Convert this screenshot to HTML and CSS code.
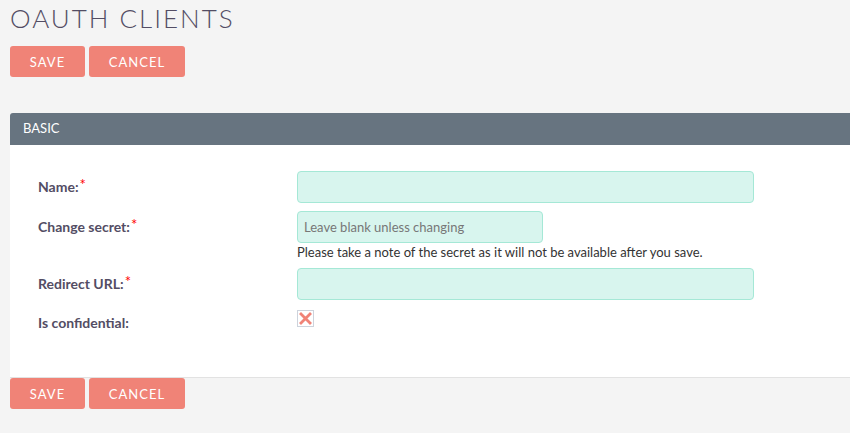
FILE: index.html
```html
<!DOCTYPE html>
<html>
<head>
<meta charset="utf-8">
<link rel="stylesheet" href="styles.css">
</head>
<body>
<h1 class="title">OAUTH CLIENTS</h1>
<div class="actions">
  <button class="btn btn-save">SAVE</button>
  <button class="btn btn-cancel">CANCEL</button>
</div>
<div class="panel">
  <div class="panel-head">BASIC</div>
  <div class="panel-body">
    <div class="row row-name">
      <label class="lbl">Name:<span class="req">*</span></label>
      <div class="field"><input class="inp inp-wide" type="text"></div>
    </div>
    <div class="row row-secret">
      <label class="lbl">Change secret:<span class="req">*</span></label>
      <div class="field">
        <input class="inp inp-short" type="text" placeholder="Leave blank unless changing">
        <div class="help">Please take a note of the secret as it will not be available after you save.</div>
      </div>
    </div>
    <div class="row row-url">
      <label class="lbl">Redirect URL:<span class="req">*</span></label>
      <div class="field"><input class="inp inp-wide" type="text"></div>
    </div>
    <div class="row row-conf">
      <label class="lbl">Is confidential:</label>
      <div class="field">
        <span class="check">
          <svg width="17" height="17" viewBox="0 0 17 17">
            <rect x="0.5" y="0.5" width="16" height="16" fill="#fff" stroke="#cdd3dc"/>
            <path d="M4 4 L13 13 M13 4 L4 13" stroke="#f08377" stroke-width="2.8" stroke-linecap="square"/>
          </svg>
        </span>
      </div>
    </div>
  </div>
</div>
<div class="actions actions-bottom">
  <button class="btn btn-save">SAVE</button>
  <button class="btn btn-cancel">CANCEL</button>
</div>
</body>
</html>
```
FILE: styles.css
```css
html, body {
  margin: 0;
  padding: 0;
  background: #f4f4f4;
  font-family: Lato, "Open Sans", sans-serif;
  overflow: hidden;
}
body {
  padding: 0 0 0 10px;
}
.title {
  margin: 0;
  padding-top: 3px;
  height: 46px;
  box-sizing: border-box;
  font-size: 26px;
  font-weight: 300;
  letter-spacing: 2px;
  color: #534d64;
  line-height: 30px;
}
.actions {
  display: flex;
  gap: 4px;
  height: 31px;
}
.btn {
  border: none;
  background: #f08377;
  color: #fff;
  font-family: Lato, sans-serif;
  font-size: 13px;
  letter-spacing: 1px;
  border-radius: 3px;
  height: 31px;
  padding: 0;
  cursor: pointer;
}
.btn-save { width: 75px; }
.btn-cancel { width: 96px; }
.panel {
  margin-top: 36px;
}
.panel-head {
  background: #677480;
  color: #fff;
  font-size: 13px;
  height: 32px;
  line-height: 30px;
  padding-left: 13px;
  border-radius: 3px 0 0 0;
}
.panel-body {
  background: #fff;
  border-bottom: 1px solid #e2e2e2;
  padding: 26px 0 0 28px;
  height: 233px;
  box-sizing: border-box;
}
.row {
  display: grid;
  grid-template-columns: 259px 1fr;
  margin-bottom: 8px;
}
.lbl {
  font-size: 14px;
  font-weight: 700;
  color: #534d64;
  padding-top: 6px;
}
.req {
  color: #ff0000;
  font-weight: 400;
  font-size: 15px;
  position: relative;
  top: -2px;
  margin-left: 1px;
}
.inp {
  display: block;
  box-sizing: border-box;
  height: 32px;
  background: #d8f5ee;
  border: 1px solid #a5e8d6;
  border-radius: 4px;
  font-family: Lato, sans-serif;
  font-size: 13px;
  padding: 0 6px;
  color: #333;
  outline: none;
}
.inp::placeholder { color: #777; }
.inp-wide { width: 457px; }
.inp-short { width: 246px; }
.help {
  font-size: 13px;
  color: #333;
  line-height: 17px;
  margin-top: 1px;
}
.row-secret { margin-bottom: 7px; }
.row-url { margin-bottom: 10px; }
.row-conf .lbl { padding-top: 4px; }
.check { display: block; width: 17px; height: 17px; }
.check svg { display: block; }
.actions-bottom { margin-top: 0; }
```
